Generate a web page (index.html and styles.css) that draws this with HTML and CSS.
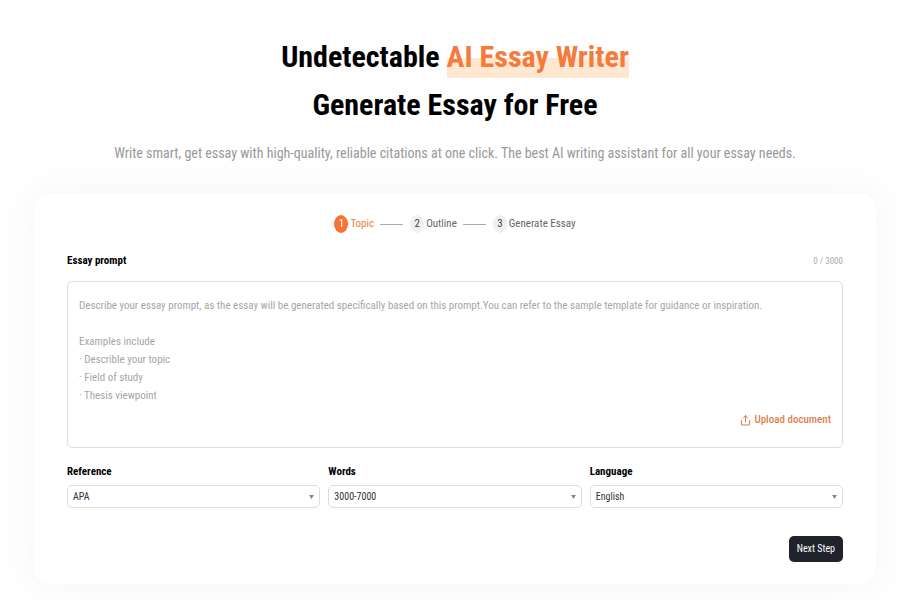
FILE: index.html
```html
<!DOCTYPE html>
<html lang="en">
<head>
  <meta charset="UTF-8">
  <meta name="viewport" content="width=device-width, initial-scale=1.0">
  <title>Undetectable AI Essay Writer</title>
  <link rel="stylesheet" href="styles.css">
</head>
<body>
  <header class="hero">
    <h1>Undetectable <span class="highlight">AI Essay Writer</span><br>Generate Essay for Free</h1>
    <p>Write smart, get essay with high-quality, reliable citations at one click. The best AI writing assistant for all your essay needs.</p>
  </header>

  <main>
    <form class="card">
      <ol class="steps">
        <li class="step active"><span class="num">1</span>Topic</li>
        <li class="step"><span class="num">2</span>Outline</li>
        <li class="step"><span class="num">3</span>Generate Essay</li>
      </ol>

      <div class="prompt-head">
        <label for="prompt">Essay prompt</label>
        <span class="counter">0 / 3000</span>
      </div>
      <div class="prompt-box">
        <textarea id="prompt" rows="6" maxlength="3000" placeholder="Describe your essay prompt, as the essay will be generated specifically based on this prompt.You can refer to the sample template for guidance or inspiration.&#10;&#10;Examples include&#10;· Describle your topic&#10;· Field of study&#10;· Thesis viewpoint"></textarea>
        <button type="button" class="upload">
          <svg width="9" height="12" viewBox="0 0 9 12" fill="none" stroke="currentColor" stroke-linecap="round" stroke-linejoin="round" aria-hidden="true">
            <path d="M4.5 8V1.5M2.4 4l2.1-2.5L6.6 4M.5 6.5V11h8V6.5"/>
          </svg>
          Upload document
        </button>
      </div>

      <div class="options">
        <div class="field">
          <label for="reference">Reference</label>
          <select id="reference">
            <option>APA</option>
            <option>MLA</option>
          </select>
        </div>
        <div class="field">
          <label for="words">Words</label>
          <select id="words">
            <option>3000-7000</option>
            <option>1000-3000</option>
          </select>
        </div>
        <div class="field">
          <label for="language">Language</label>
          <select id="language">
            <option>English</option>
            <option>Spanish</option>
          </select>
        </div>
      </div>

      <div class="actions">
        <button type="submit" class="next">Next Step</button>
      </div>
    </form>
  </main>
</body>
</html>
```
FILE: styles.css
```css
* {
  box-sizing: border-box;
}
body {
  margin: 0;
  padding: 33px 24px 16px 34px;
  font-family: "Roboto Condensed", "Liberation Sans Narrow", Roboto, sans-serif;
  font-size: 11px;
  color: #000;
  background: #fefefe;
}
button, select, textarea {
  font: inherit;
}
.hero {
  text-align: center;
}
.hero h1 {
  margin: 0;
  font-size: 30px;
  line-height: 48px;
  font-weight: 700;
}
.highlight {
  padding-bottom: 4px;
  color: #f27b3d;
  background: linear-gradient(transparent 50%, #ffe8d1 50%);
}
.hero p {
  margin: 14px 0 30px;
  font-size: 14px;
  line-height: 20px;
  color: #999;
}
.card {
  padding: 21px 33px 22px;
  border-radius: 16px;
  background: #fff;
  box-shadow: 0 0 32px rgba(0, 0, 0, 0.04);
}
.steps {
  display: flex;
  justify-content: center;
  margin: 0;
  padding: 0;
  list-style: none;
}
.step {
  display: flex;
  align-items: center;
  gap: 2px;
  line-height: 20px;
  color: #666;
}
.step + .step::before {
  content: "";
  width: 23px;
  height: 1px;
  margin: 0 5px 0 6px;
  background: #aaa;
}
.num {
  width: 14px;
  height: 18px;
  border-radius: 50%;
  line-height: 18px;
  text-align: center;
  color: #444;
  background: #f0f0f1;
}
.step.active {
  color: #f27b3d;
}
.step.active .num {
  color: #fff;
  background: #f97332;
}
.prompt-head {
  display: flex;
  justify-content: space-between;
  align-items: center;
  margin: 17px 0 10px;
  line-height: 20px;
}
label {
  font-weight: 700;
}
.counter {
  font-size: 9px;
  color: #aaa;
}
.prompt-box {
  display: flex;
  flex-direction: column;
  padding: 15px 11px;
  border: 1px solid #ddd;
  border-radius: 5px;
}
.prompt-box textarea {
  width: 100%;
  padding: 0;
  border: 0;
  outline: 0;
  resize: none;
  line-height: 18px;
  background: none;
}
.prompt-box textarea::placeholder {
  color: #a6a6a6;
  opacity: 1;
}
.upload {
  display: flex;
  align-items: center;
  align-self: flex-end;
  gap: 4px;
  margin: 5px 0 2px;
  padding: 0;
  border: 0;
  line-height: 20px;
  font-weight: 500;
  color: #dd7f51;
  background: none;
  cursor: pointer;
}
.options {
  display: grid;
  grid-template-columns: repeat(3, 1fr);
  gap: 8px;
  margin-top: 14px;
}
.field {
  display: grid;
  gap: 3px;
  line-height: 20px;
}
.field select {
  width: 100%;
  height: 23px;
  padding: 0 5px;
  border: 1px solid #ddd;
  border-radius: 5px;
  appearance: none;
  font-size: 10px;
  color: #333;
  background: url("data:image/svg+xml,%3Csvg xmlns='http://www.w3.org/2000/svg' width='5' height='4'%3E%3Cpath d='M0 0h5L2.5 4z' fill='%23888'/%3E%3C/svg%3E") no-repeat right 5px center #fff;
}
.actions {
  display: flex;
  justify-content: flex-end;
  margin-top: 28px;
}
.next {
  padding: 3px 8px;
  border: 0;
  border-radius: 5px;
  font-size: 10px;
  line-height: 20px;
  color: #fff;
  background: #20222c;
  cursor: pointer;
}
```
